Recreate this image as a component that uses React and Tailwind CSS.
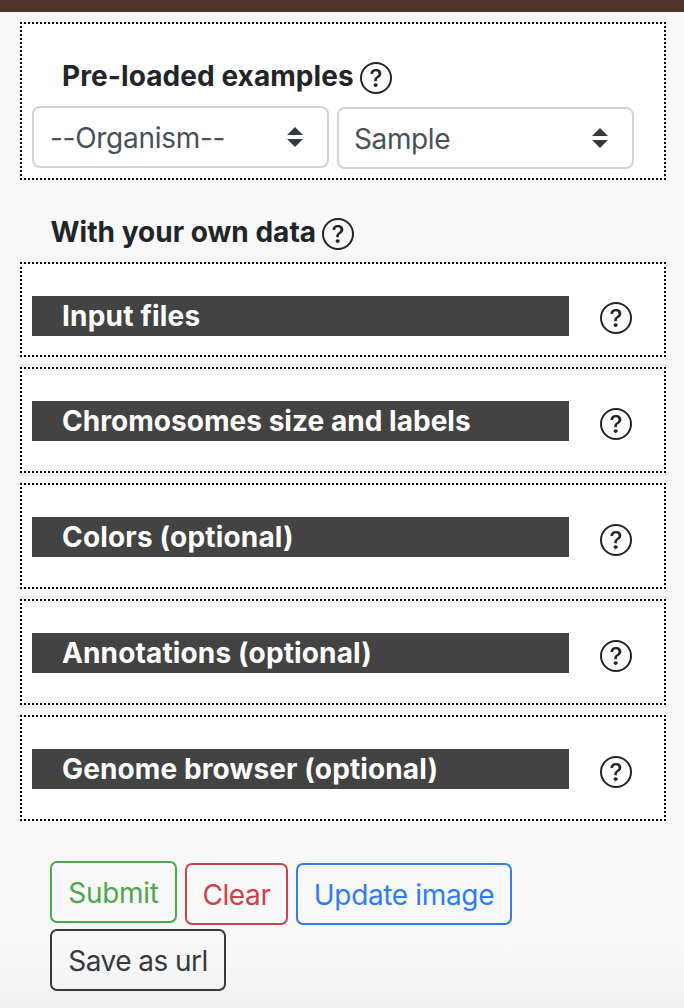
import React from "react";
import { BsQuestionCircle } from "react-icons/bs";

function Help({ className = "" }) {
  return <BsQuestionCircle className={`size-8 shrink-0 text-[#212529] ${className}`} />;
}

function Select({ label, className }) {
  return (
    <div className={`flex h-[62px] w-[297px] items-center justify-between rounded-lg border-2 border-[#ced4da] bg-white pr-6 text-[#495057] ${className}`}>
      <span className="pt-0.5">{label}</span>
      <svg viewBox="0 0 16 20" className="h-5 w-4 fill-[#343a40]">
        <path d="M8 0 0 8h16zM0 12h16l-8 8z" />
      </svg>
    </div>
  );
}

const sections = [
  { title: "Input files", height: "h-[95px]", help: "mt-[38px]", tracking: "tracking-[0.2px]" },
  { title: "Chromosomes size and labels", height: "h-[106px]", help: "mt-[39px]", tracking: "tracking-[0.04px]" },
  { title: "Colors (optional)", height: "h-[106px]", help: "mt-[39px]", tracking: "tracking-[0.17px]" },
  { title: "Annotations (optional)", height: "h-[106px]", help: "mt-[39px]", tracking: "tracking-[0.14px]" },
  { title: "Genome browser (optional)", height: "h-[106px]", help: "mt-[39px]", tracking: "tracking-[0.12px]" },
];

function Button({ children, className }) {
  return (
    <button className={`h-[62px] rounded-[7px] border-2 pt-0.5 whitespace-nowrap ${className}`}>
      {children}
    </button>
  );
}

export default function App() {
  return (
    <div className="flex h-[1008px] w-[684px] flex-col overflow-hidden bg-[#f8f8f8] bg-[linear-gradient(to_bottom,#f8f8f8_945px,#f4f4f4_985px,#eeeeee_1008px)] font-['Inter',sans-serif] text-[28px] leading-10 text-[#212529]">
      <div className="h-3 shrink-0 bg-[#51332f]" />
      <section className="mt-2.5 ml-5 h-[158px] w-[646px] shrink-0 border-2 border-dotted border-black bg-white pl-2.5">
        <div className="mt-8 flex h-10 pl-[30px]">
          <h2 className="w-[298px] font-bold whitespace-nowrap tracking-[0.08px]">Pre-loaded examples</h2>
          <Help className="mt-1.5" />
        </div>
        <div className="mt-2.5 flex gap-2">
          <Select label="--Organism--" className="pl-4 tracking-[-0.28px]" />
          <Select label="Sample" className="mt-px pl-[15px] tracking-[-0.4px]" />
        </div>
      </section>
      <div className="mt-8 flex h-10 shrink-0 pl-[50.5px]">
        <h2 className="w-[271.5px] font-bold whitespace-nowrap tracking-[0.02px]">With your own data</h2>
        <Help className="mt-1.5" />
      </div>
      <div className="mt-2.5 ml-5 flex shrink-0 flex-col gap-2.5">
        {sections.map((s) => (
          <section key={s.title} className={`flex w-[646px] border-2 border-dotted border-black bg-white pl-2.5 ${s.height}`}>
            <h3 className={`mt-8 h-10 w-[537px] bg-[#434343] pl-[30px] font-bold whitespace-nowrap text-white ${s.tracking}`}>{s.title}</h3>
            <Help className={`ml-[31px] ${s.help}`} />
          </section>
        ))}
      </div>
      <div className="mt-10 ml-[50px] flex shrink-0 gap-2">
        <Button className="w-[127px] border-[#4fa64f] tracking-[-0.3px] text-[#4fa64f]">Submit</Button>
        <Button className="mt-0.5 w-[103px] border-[#ce4249] tracking-[-0.4px] text-[#ce4249]">Clear</Button>
        <Button className="mt-0.5 w-[216px] border-[#2f7df6] tracking-[-0.35px] text-[#2f7df6]">Update image</Button>
      </div>
      <div className="mt-1 ml-[50px] flex">
        <Button className="w-[176px] border-[#343a40] tracking-[-0.55px] text-[#343a40]">Save as url</Button>
      </div>
    </div>
  );
}
